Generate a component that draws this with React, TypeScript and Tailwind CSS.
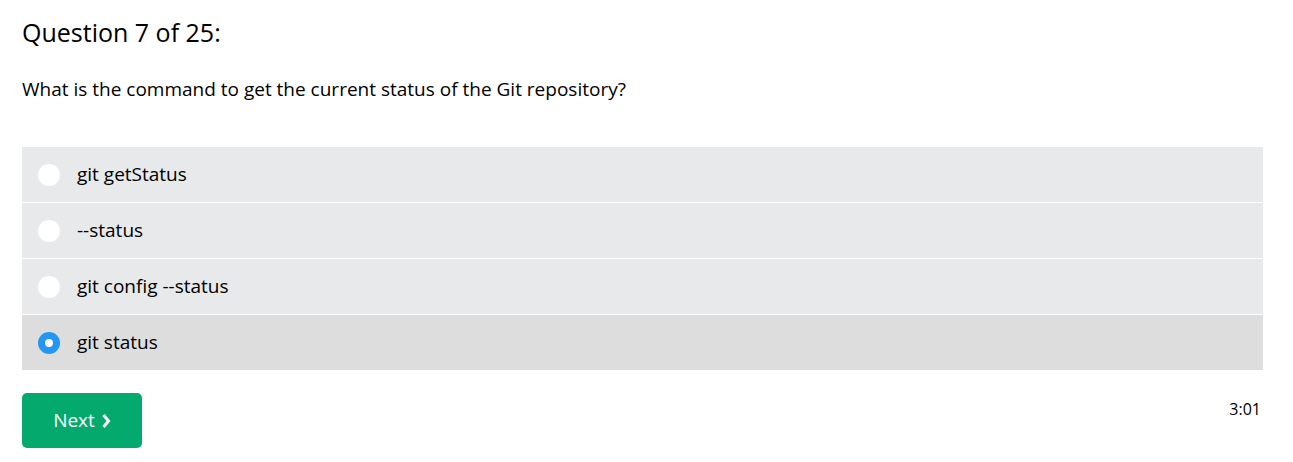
import React, { useState } from 'react';

const options = ['git getStatus', '--status', 'git config --status', 'git status'];

export default function App() {
  const [selected, setSelected] = useState(3);

  return (
    <div className="bg-white pl-[22px] pr-[30px] pt-[15px] font-['Open_Sans','Noto_Sans',sans-serif] text-black">
      <h2 className="text-[25px] leading-[34px]">Question 7 of 25:</h2>
      <p className="mt-[27px] text-[19px] leading-[26px]">
        What is the command to get the current status of the Git repository?
      </p>
      <div className="mt-[45px] flex flex-col gap-px">
        {options.map((opt, i) => (
          <label
            key={opt}
            onClick={() => setSelected(i)}
            className={
              'flex h-[55px] cursor-pointer items-center ' +
              (selected === i ? 'bg-[#dddddd]' : 'bg-[#e7e9eb]')
            }
          >
            <span
              className={
                'ml-[16px] flex h-[22px] w-[22px] items-center justify-center rounded-full ' +
                (selected === i ? 'bg-[#2196f3]' : 'bg-white')
              }
            >
              {selected === i && <span className="h-[8px] w-[8px] rounded-full bg-white" />}
            </span>
            <span className="ml-[17px] text-[19px]">{opt}</span>
          </label>
        ))}
      </div>
      <div className="mt-[23px] flex items-start justify-between pb-[14px]">
        <button className="flex h-[55px] w-[120px] items-center justify-center gap-[6px] rounded-[5px] bg-[#04aa6d] text-[19px] text-white">
          Next
          <svg width="10" height="16" viewBox="0 0 10 16" fill="none">
            <path d="M2.5 2 L7.5 8 L2.5 14" stroke="white" strokeWidth="3" />
          </svg>
        </button>
        <span className="mr-[2px] mt-[4px] text-[16px]">3:01</span>
      </div>
    </div>
  );
}
